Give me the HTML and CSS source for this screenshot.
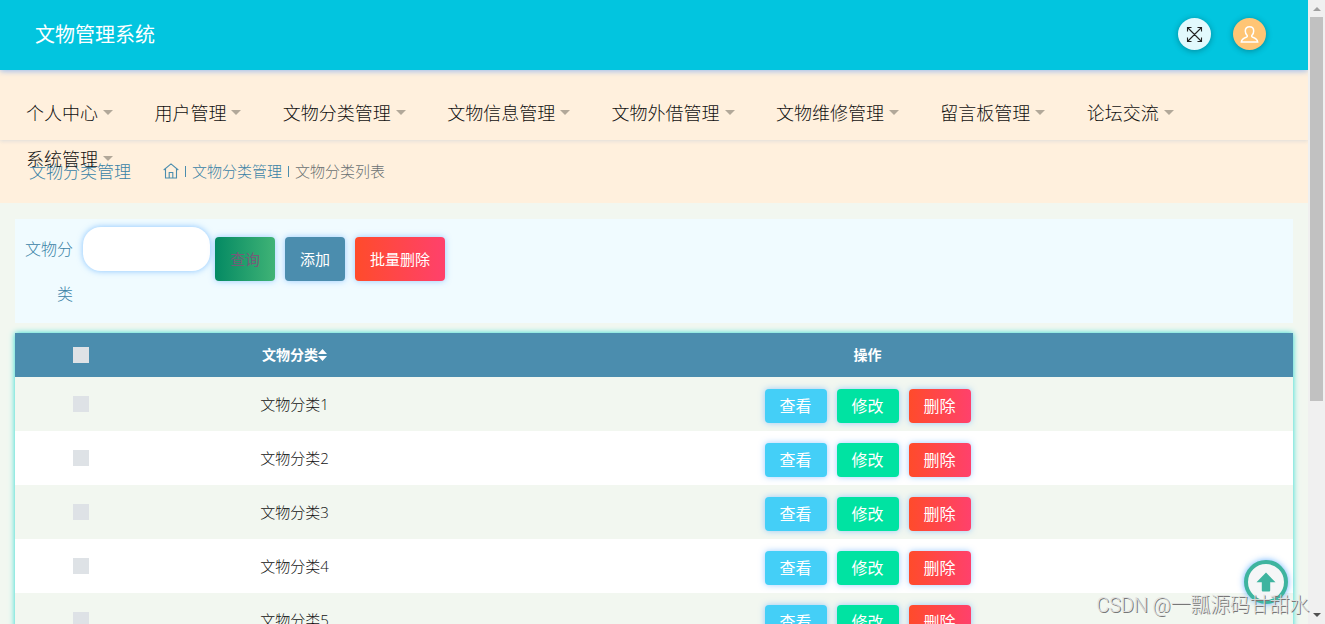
FILE: index.html
```html
<!DOCTYPE html>
<html lang="zh-CN">
<head>
<meta charset="utf-8">
<title>文物管理系统</title>
<link rel="stylesheet" href="styles.css">
</head>
<body>
<div class="window">
  <div class="page">
    <header class="topbar">
      <div class="brand">文物管理系统</div>
      <div class="tools">
        <span class="tool tool-full"><svg width="17" height="17" viewBox="0 0 17 17" fill="none" stroke="#222" stroke-width="1.1"><path d="M1.500 1.500L15.500 15.500M15.500 1.500L1.500 15.500M1.500 5.500V1.500H5.500M11.500 1.500H15.500V5.500M1.500 11.500V15.500H5.500M11.500 15.500H15.500V11.500"/></svg></span>
        <span class="tool tool-user"><svg width="19" height="19" viewBox="0 0 19 19" fill="none" stroke="#fff" stroke-width="1.5"><path d="M9.500 1.700C6.900 1.700 5.300 3.400 5.300 5.900C5.300 8.300 6.200 9.500 7.200 10.500C7.600 11.400 7 12 6.200 12.300C3.400 13.200 1.600 14.500 1.300 17.100H17.700C17.400 14.500 15.600 13.200 12.800 12.300C12 12 11.400 11.400 11.800 10.500C12.800 9.500 13.700 8.300 13.700 5.900C13.700 3.400 12.100 1.700 9.500 1.700Z"/></svg></span>
      </div>
    </header>
    <nav class="menu">
      <a class="item">个人中心</a><a class="item">用户管理</a><a class="item">文物分类管理</a><a class="item">文物信息管理</a><a class="item">文物外借管理</a><a class="item">文物维修管理</a><a class="item">留言板管理</a><a class="item">论坛交流</a><a class="item">系统管理</a>
    </nav>
    <div class="crumbs">
      <h3 class="title">文物分类管理</h3>
      <div class="trail">
        <svg width="16" height="16" viewBox="0 0 16 16" fill="none" stroke="#4b8dae" stroke-width="1.100"><path d="M.7 7L8 .9L15.300 7M2.500 6V15H13.500V6M6.200 15V9.500H9.800V15"/></svg>
        <i class="bar"></i><span>文物分类管理</span><i class="bar"></i><span class="here">文物分类列表</span>
      </div>
    </div>
    <main class="content">
      <form class="search">
        <label class="label" for="kind">文物分类</label>
        <input class="field" id="kind" type="text">
        <div class="actions">
          <button type="button" class="btn query">查询</button>
          <button type="button" class="btn add">添加</button>
          <button type="button" class="btn danger">批量删除</button>
        </div>
      </form>
      <div class="table">
        <div class="row head"><div><i class="check"></i></div><div class="cell">文物分类<svg class="sort" width="9" height="14" viewBox="0 0 9 14" fill="#fff"><path d="M4.500 1L9 6H0ZM4.500 13L0 8H9Z"/></svg></div><div class="cell">操作</div></div>
        <div class="row"><div><i class="check"></i></div><div class="cell">文物分类1</div><div class="ops"><button class="op view">查看</button><button class="op edit">修改</button><button class="op danger">删除</button></div></div>
        <div class="row"><div><i class="check"></i></div><div class="cell">文物分类2</div><div class="ops"><button class="op view">查看</button><button class="op edit">修改</button><button class="op danger">删除</button></div></div>
        <div class="row"><div><i class="check"></i></div><div class="cell">文物分类3</div><div class="ops"><button class="op view">查看</button><button class="op edit">修改</button><button class="op danger">删除</button></div></div>
        <div class="row"><div><i class="check"></i></div><div class="cell">文物分类4</div><div class="ops"><button class="op view">查看</button><button class="op edit">修改</button><button class="op danger">删除</button></div></div>
        <div class="row"><div><i class="check"></i></div><div class="cell">文物分类5</div><div class="ops"><button class="op view">查看</button><button class="op edit">修改</button><button class="op danger">删除</button></div></div>
      </div>
    </main>
  </div>
  <div class="scrollbar"><i class="arrow up"></i><i class="thumb"></i><i class="arrow down"></i></div>
  <div class="totop"><svg width="20" height="20" viewBox="0 0 20 20" fill="#3eb49f"><path d="M10 .5L19.500 10.300H14.200V18.500Q14.200 19.500 13.200 19.500H6.800Q5.800 19.500 5.800 18.500V10.300H.5Z"/></svg></div>
  <div class="watermark">CSDN @一瓢源码甘甜水</div>
</div>
</body>
</html>
```
FILE: styles.css
```css
* { box-sizing: border-box; }
body {
  margin: 0;
  font-family: "Open Sans", "Noto Sans CJK SC", sans-serif;
  font-weight: 300;
  color: #111;
}
button, input { font-family: inherit; font-weight: inherit; border: 0; margin: 0; }
.window { position: relative; display: flex; width: 1325px; height: 624px; overflow: hidden; }
.page { width: 1308px; height: 624px; overflow: hidden; background: #f2f7f0; }

.topbar {
  position: relative; z-index: 3;
  display: flex; justify-content: space-between; align-items: center;
  height: 70px; padding: 0 42px 2px 35px;
  background: #02c5df;
  box-shadow: 0 1px 6px rgba(64, 140, 255, .55);
}
.brand { padding-top: 2px; font-size: 20px; font-weight: 400; line-height: 30px; color: #fff; }
.tools { display: flex; gap: 22px; }
.tool {
  display: flex; align-items: center; justify-content: center;
  width: 33px; height: 32px; border-radius: 50%;
  box-shadow: 0 1px 6px rgba(0, 0, 0, .3);
}
.tool-full { background: #e2f9fd; }
.tool-user { background: #ffc575; }

.menu {
  position: relative; z-index: 2;
  display: flex; flex-wrap: wrap; align-content: flex-start;
  height: 70px; padding: 20px 26px 0;
  background: #fff0dd;
  box-shadow: 0 1px 4px rgba(100, 150, 210, .22);
}
.item {
  display: flex; align-items: center;
  height: 46px; padding-right: 41.400px;
  font-size: 18px; line-height: 46px; white-space: nowrap;
}
.item::after {
  content: ""; margin: 0 0 1px 5px;
  border: 5px solid transparent; border-top-color: #b2a899; border-bottom: 0;
}

.crumbs {
  display: flex; align-items: center; gap: 32px;
  height: 63px; padding: 0 29px;
  background: #fff0dd; color: #3a82a6;
}
.title { margin: 0; padding-top: 1px; font-size: 17px; font-weight: 300; line-height: 24px; }
.trail { display: flex; align-items: center; padding-bottom: 1px; font-size: 15px; line-height: 22px; }
.bar { width: 1px; height: 11px; margin: 0 6px; background: #4b8dae; }
.here { color: #6a7072; }

.content { padding: 16px 15px 0; }
.search {
  display: flex; align-items: flex-start;
  height: 104px; margin-bottom: 10px; padding: 8px 10px;
  background: #f0fbff;
}
.label { width: 48px; margin-right: 10px; font-size: 16px; line-height: 45px; text-align: right; color: #3a82a6; }
.field {
  width: 127px; height: 44px; margin-right: 5px; border-radius: 18px;
  background: #fff; box-shadow: 0 0 6px rgba(64, 158, 255, .6);
}
.actions { display: flex; gap: 10px; padding-top: 10px; }
.btn {
  height: 44px; padding: 0 15px 2px; border-radius: 4px;
  font-size: 15px; font-weight: 400; color: #fff;
  box-shadow: 0 0 6px rgba(64, 158, 255, .5);
}
.query { background: linear-gradient(90deg, #048a63, #40b376); color: #755c78; }
.add { background: #4b8dae; }
.danger { background: linear-gradient(90deg, #ff4b2b, #ff416c); }

.table { box-shadow: 0 0 6px #24dbd0; }
.row {
  display: grid; grid-template-columns: 132px 295px 851px;
  align-items: center; justify-items: center;
  height: 54px; background: #f2f7f0; font-size: 15px;
}
.row:nth-child(odd) { background: #fff; }
.row.head { height: 44px; background: #4b8dae; color: #fff; font-size: 14px; font-weight: 700; }
.row > div { display: flex; align-items: center; }
.row .cell { padding-bottom: 2px; }
.sort { margin-top: 2px; }
.check { width: 16px; height: 16px; background: #dee2e6; }
.row .ops { gap: 10px; padding-top: 4px; }
.op {
  width: 62px; height: 34px; padding: 0 0 2px; border-radius: 4px;
  font-size: 16px; font-weight: 400; color: #fff;
  box-shadow: 0 0 6px rgba(64, 158, 255, .5);
}
.view { background: #44cff7; }
.edit { background: #00e3a2; }

.scrollbar {
  display: flex; flex-direction: column; align-items: center;
  width: 17px; background: #f0f0f0;
}
.arrow { border: 4px solid transparent; }
.up { margin-top: 7px; border-top: 0; border-bottom-color: #a0a0a0; }
.thumb { width: 13px; height: 384px; margin-top: 6px; background: #c1c1c1; }
.down { margin-top: auto; margin-bottom: 7px; border-bottom: 0; border-top-color: #505050; }

.totop {
  position: absolute; left: 1244px; top: 560px; z-index: 4;
  display: flex; align-items: center; justify-content: center;
  width: 44px; height: 44px; border: 4px solid #3eb49f; border-radius: 50%;
  background: #f5f6f7; box-shadow: 0 0 6px rgba(64, 158, 255, .8);
}
.watermark {
  position: absolute; right: 16px; bottom: 4px; z-index: 5;
  font: 300 20px/30px Roboto, "Noto Sans CJK SC", sans-serif;
  letter-spacing: -.2px;
  white-space: nowrap; color: rgba(225, 225, 225, .9);
  text-shadow: 1px 1px 0 #777;
}
```
